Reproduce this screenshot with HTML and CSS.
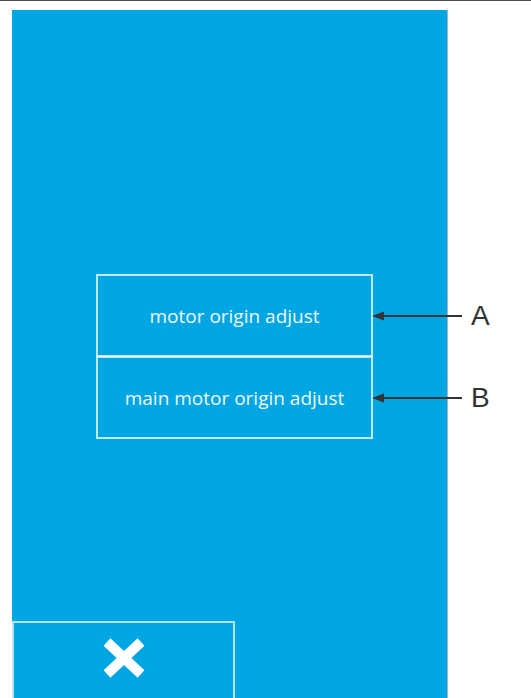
FILE: index.html
```html
<!DOCTYPE html>
<html lang="en">
<head>
    <meta charset="UTF-8">
    <meta name="viewport" content="width=device-width, initial-scale=1.0">
    <title>Origin Adjust</title>
    <link rel="stylesheet" href="styles.css">
</head>
<body>
    <main class="panel">
        <div class="menu">
            <div class="menu-row">
                <button class="menu-btn" type="button">motor origin adjust</button>
                <div class="callout">
                    <svg class="arrow" width="90" height="10" viewBox="0 0 90 10">
                        <polygon points="0,5 12,0.5 12,9.5" fill="#333"/>
                        <line x1="10" y1="5" x2="90" y2="5" stroke="#333" stroke-width="2"/>
                    </svg>
                    <span class="callout-label">A</span>
                </div>
            </div>
            <div class="menu-row">
                <button class="menu-btn" type="button">main motor origin adjust</button>
                <div class="callout">
                    <svg class="arrow" width="90" height="10" viewBox="0 0 90 10">
                        <polygon points="0,5 12,0.5 12,9.5" fill="#333"/>
                        <line x1="10" y1="5" x2="90" y2="5" stroke="#333" stroke-width="2"/>
                    </svg>
                    <span class="callout-label">B</span>
                </div>
            </div>
        </div>
        <footer class="panel-foot">
            <button class="close-btn" type="button" aria-label="close">
                <svg width="42" height="40" viewBox="0 0 42 40">
                    <line x1="4" y1="4" x2="38" y2="36" stroke="#fff" stroke-width="10"/>
                    <line x1="38" y1="4" x2="4" y2="36" stroke="#fff" stroke-width="10"/>
                </svg>
            </button>
        </footer>
    </main>
</body>
</html>
```

FILE: styles.css
```css
html, body {
    height: 100%;
    overflow: hidden;
}
body {
    margin: 0;
    background: #fff;
    border-top: 1px solid #4b4b4b;
    box-sizing: border-box;
    font-family: 'Open Sans', sans-serif;
}
.panel {
    margin: 9px 0 0 12px;
    width: 435px;
    height: calc(100vh - 10px);
    background: #00a6e2;
    border-right: 1px solid #a7b6bf;
    display: flex;
    flex-direction: column;
}
.menu {
    margin: 264px 0 0 84px;
    display: flex;
    flex-direction: column;
}
.menu-row {
    display: flex;
    align-items: center;
}
.menu-row + .menu-row {
    margin-top: -1px;
}
.menu-btn {
    flex-shrink: 0;
    width: 277px;
    height: 83px;
    box-sizing: border-box;
    background: transparent;
    border: 2px solid rgba(255, 255, 255, 0.75);
    color: #eef8fd;
    font-family: 'Open Sans', sans-serif;
    font-size: 19px;
    padding: 0;
}
.callout {
    flex-shrink: 0;
    display: flex;
    align-items: center;
    gap: 9px;
    margin-left: -1px;
}
.arrow {
    display: block;
}
.callout-label {
    color: #333;
    font-family: 'Liberation Sans', Arial, sans-serif;
    font-size: 28px;
    line-height: 1;
}
.panel-foot {
    margin-top: 182px;
}
.close-btn {
    width: 223px;
    height: 82px;
    box-sizing: border-box;
    background: transparent;
    border: 2px solid rgba(255, 255, 255, 0.7);
    display: flex;
    align-items: center;
    justify-content: center;
    padding: 0 0 8px;
}
```
